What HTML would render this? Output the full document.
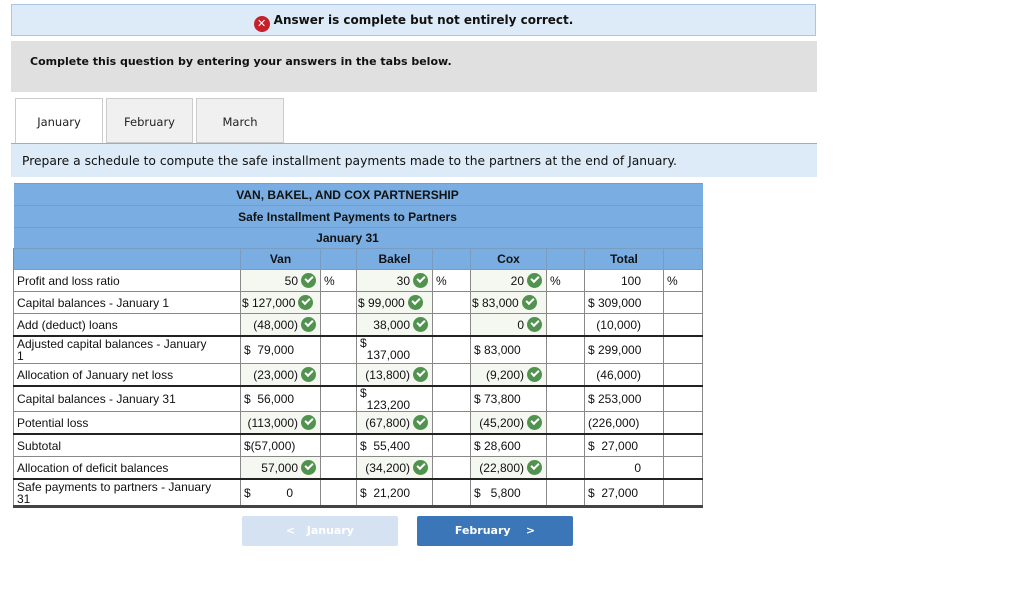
<!DOCTYPE html>
<html><head><meta charset="utf-8"><style>
body{margin:0;width:1024px;height:609px;background:#fff;position:relative;overflow:hidden;font-family:"DejaVu Sans",sans-serif}
.banner{position:absolute;left:11px;top:4px;width:805px;height:32px;background:#dcebf7;border:1px solid #a9c6e3;box-sizing:border-box;text-align:center;font-weight:bold;font-size:12px;line-height:31px;color:#111}
.x{display:inline-block;width:16px;height:16px;border-radius:50%;background:#c8202a;color:#fff;font-size:11px;line-height:16px;vertical-align:-3px;margin-right:4px}
.grey{position:absolute;left:11px;top:41px;width:806px;height:51px;background:#e0e0e0;font-weight:bold;font-size:11px;line-height:42px;padding-left:19px;box-sizing:border-box;color:#111}
.tab{position:absolute;top:98px;height:45px;background:#f0f0f0;border:1px solid #ccc;box-sizing:border-box;font-size:11.5px;text-align:center;line-height:46px;color:#222}
.prep{position:absolute;left:11px;top:143px;width:806px;height:34px;background:#dcebf7;border-top:1px solid #aaa;box-sizing:border-box;font-size:12.3px;line-height:34px;padding-left:11px;color:#111}
table{position:absolute;left:13px;top:183px;border-collapse:collapse;font-family:"Liberation Sans",Arial,sans-serif;font-size:12px;color:#111;table-layout:fixed}
td{border:1px solid #888;padding:0 3px;height:21px;white-space:nowrap;overflow:hidden}
tr.h td{background:#7aaee2;font-weight:bold;text-align:center;border-color:#7a9cc0;height:20px}
tr.h.t td{border-left:none;border-right:none;padding-right:24px}
.g{background:#f4f8f1;text-align:right;padding-right:4px}
.r{text-align:right}
.c{display:inline-block;width:15px;height:15px;border-radius:50%;background:#52924f;vertical-align:-3px;margin-left:3px;position:relative}
.c:after{content:"";position:absolute;left:4px;top:3px;width:6px;height:3px;border-left:2px solid #fff;border-bottom:2px solid #fff;transform:rotate(-45deg)}
tr.k td{border-top:2px solid #222}
.lbl{white-space:normal;line-height:12px}
.btn{position:absolute;top:516px;height:30px;width:156px;font-family:"DejaVu Sans",sans-serif;font-weight:bold;font-size:11px;color:#fff;text-align:center;line-height:30px;border-radius:2px}
</style></head><body>
<div class="banner"><span class="x">✕</span>Answer is complete but not entirely correct.</div>
<div class="grey">Complete this question by entering your answers in the tabs below.</div>
<div class="tab" style="left:15px;width:88px;background:#fff;border-bottom:none;height:46px">January</div>
<div class="tab" style="left:106px;width:87px">February</div>
<div class="tab" style="left:196px;width:88px">March</div>
<div class="prep">Prepare a schedule to compute the safe installment payments made to the partners at the end of January.</div>
<table>
<colgroup><col style="width:227px"><col style="width:80px"><col style="width:36px"><col style="width:76px"><col style="width:38px"><col style="width:76px"><col style="width:38px"><col style="width:79px"><col style="width:39px"></colgroup>
<tr class="h t"><td colspan="9" style="height:21px">VAN, BAKEL, AND COX PARTNERSHIP</td></tr>
<tr class="h t"><td colspan="9" style="height:21px">Safe Installment Payments to Partners</td></tr>
<tr class="h t"><td colspan="9">January 31</td></tr>
<tr class="h"><td style="border-left:1px solid #888"></td><td>Van</td><td></td><td>Bakel</td><td></td><td>Cox</td><td></td><td>Total</td><td></td></tr>
<tr><td>Profit and loss ratio</td><td class="g">50<span class="c"></span></td><td>%</td><td class="g">30<span class="c"></span></td><td>%</td><td class="g">20<span class="c"></span></td><td>%</td><td class="r" style="padding-right:22px">100</td><td>%</td></tr>
<tr><td>Capital balances - January 1</td><td class="g" style="text-align:left;padding-left:1px">$ 127,000<span class="c"></span></td><td></td><td class="g" style="text-align:left;padding-left:1px">$ 99,000<span class="c"></span></td><td></td><td class="g" style="text-align:left;padding-left:1px">$ 83,000<span class="c"></span></td><td></td><td>$ 309,000</td><td></td></tr>
<tr><td>Add (deduct) loans</td><td class="g">(48,000)<span class="c"></span></td><td></td><td class="g">38,000<span class="c"></span></td><td></td><td class="g">0<span class="c"></span></td><td></td><td class="r" style="padding-right:22px">(10,000)</td><td></td></tr>
<tr class="k"><td class="lbl" style="height:26px">Adjusted capital balances - January<br>1</td><td>$ &nbsp;79,000</td><td></td><td class="lbl" style="vertical-align:top">$<br>&nbsp;&nbsp;137,000</td><td></td><td>$ 83,000</td><td></td><td>$ 299,000</td><td></td></tr>
<tr><td>Allocation of January net loss</td><td class="g">(23,000)<span class="c"></span></td><td></td><td class="g">(13,800)<span class="c"></span></td><td></td><td class="g">(9,200)<span class="c"></span></td><td></td><td class="r" style="padding-right:22px">(46,000)</td><td></td></tr>
<tr class="k"><td style="height:24px">Capital balances - January 31</td><td>$ &nbsp;56,000</td><td></td><td class="lbl" style="vertical-align:top">$<br>&nbsp;&nbsp;123,200</td><td></td><td>$ 73,800</td><td></td><td>$ 253,000</td><td></td></tr>
<tr><td>Potential loss</td><td class="g">(113,000)<span class="c"></span></td><td></td><td class="g">(67,800)<span class="c"></span></td><td></td><td class="g">(45,200)<span class="c"></span></td><td></td><td>(226,000)</td><td></td></tr>
<tr class="k"><td>Subtotal</td><td>$(57,000)</td><td></td><td>$ &nbsp;55,400</td><td></td><td>$ 28,600</td><td></td><td>$ &nbsp;27,000</td><td></td></tr>
<tr><td>Allocation of deficit balances</td><td class="g">57,000<span class="c"></span></td><td></td><td class="g">(34,200)<span class="c"></span></td><td></td><td class="g">(22,800)<span class="c"></span></td><td></td><td class="r" style="padding-right:22px">0</td><td></td></tr>
<tr class="k" style="border-bottom:3px solid #444"><td class="lbl" style="height:25px">Safe payments to partners - January<br>31</td><td>$ <span style="float:right;padding-right:24px">0</span></td><td></td><td>$ &nbsp;21,200</td><td></td><td>$ &nbsp;&nbsp;5,800</td><td></td><td>$ &nbsp;27,000</td><td></td></tr>
</table>
<div class="btn" style="left:242px;background:#d5e2f1">&lt;&nbsp;&nbsp; January</div>
<div class="btn" style="left:417px;background:#3a76b8">February&nbsp;&nbsp;&nbsp; &gt;</div>
</body></html>
